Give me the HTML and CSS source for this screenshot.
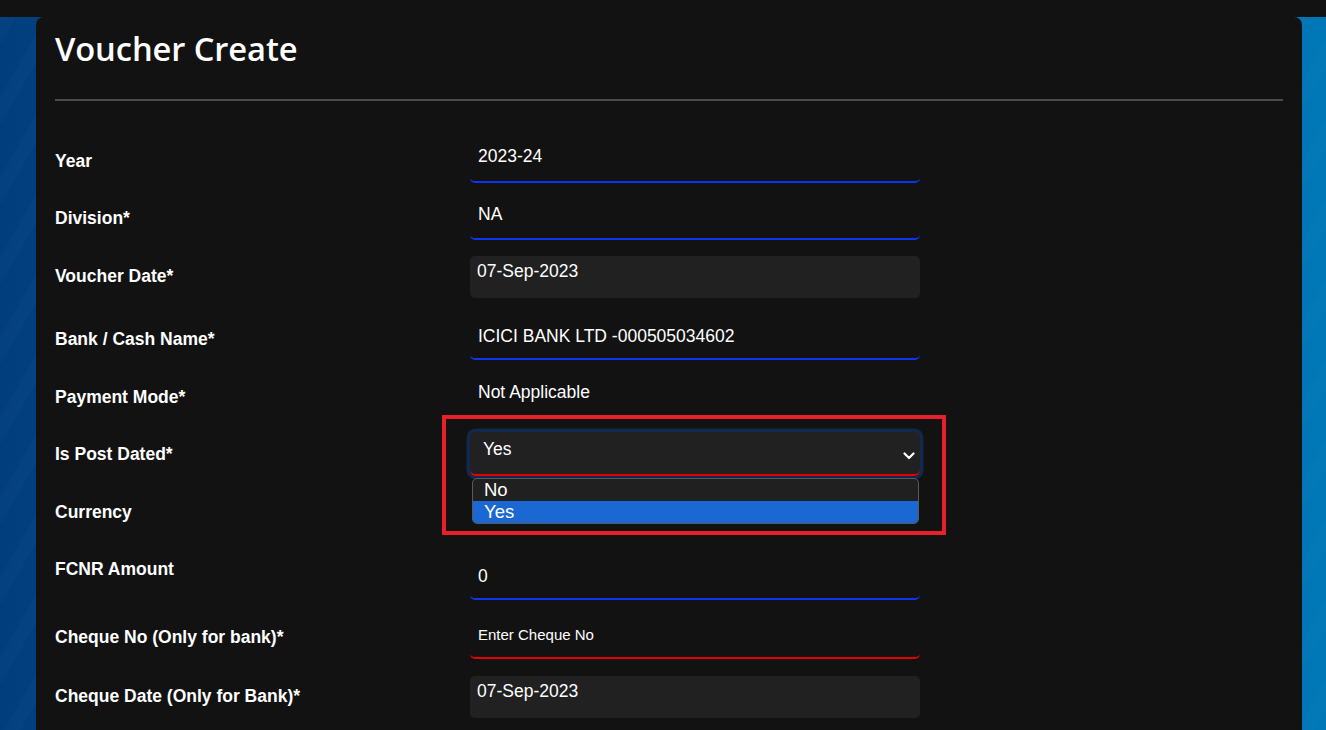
FILE: index.html
```html
<!DOCTYPE html>
<html lang="en">
<head>
<meta charset="utf-8">
<title>Voucher Create</title>
<link rel="stylesheet" href="styles.css">
</head>
<body>
<div class="topbar"></div>
<main class="backdrop">
  <section class="card">
    <h1 class="title">Voucher Create</h1>
    <div class="rule"></div>
    <form class="form">
      <div class="row r1">
        <label class="label">Year</label>
        <div class="field line blue">2023-24</div>
      </div>
      <div class="row r2">
        <label class="label">Division*</label>
        <div class="field line blue">NA</div>
      </div>
      <div class="row r3">
        <label class="label">Voucher Date*</label>
        <div class="field datebox">07-Sep-2023</div>
      </div>
      <div class="row r4">
        <label class="label">Bank / Cash Name*</label>
        <div class="field line blue">ICICI BANK LTD -000505034602</div>
      </div>
      <div class="row r5">
        <label class="label">Payment Mode*</label>
        <div class="field plain">Not Applicable</div>
      </div>
      <div class="row r6">
        <label class="label">Is Post Dated*</label>
        <div class="selectwrap">
          <div class="select">
            <span>Yes</span>
            <svg class="chev" width="12" height="8" viewBox="0 0 12 8"><path d="M1.5 1.5 L6 6 L10.5 1.5" fill="none" stroke="#fff" stroke-width="2.2" stroke-linecap="round" stroke-linejoin="round"/></svg>
          </div>
          <ul class="options">
            <li class="opt">No</li>
            <li class="opt active">Yes</li>
          </ul>
          <div class="highlight"></div>
        </div>
      </div>
      <div class="row r7">
        <label class="label">Currency</label>
        <div class="field"></div>
      </div>
      <div class="row r8">
        <label class="label">FCNR Amount</label>
        <div class="field line blue">0</div>
      </div>
      <div class="row r9">
        <label class="label">Cheque No (Only for bank)*</label>
        <div class="field line red placeholder">Enter Cheque No</div>
      </div>
      <div class="row r10">
        <label class="label">Cheque Date (Only for Bank)*</label>
        <div class="field datebox">07-Sep-2023</div>
      </div>
    </form>
  </section>
</main>
</body>
</html>
```

FILE: styles.css
```css
* { box-sizing: border-box; }
html, body { margin: 0; padding: 0; }
body {
  width: 1326px;
  height: 730px;
  overflow: hidden;
  background: #121212;
  font-family: "Liberation Sans", Arial, sans-serif;
  color: #fff;
}
.topbar {
  height: 17px;
  background: #121212;
}
.backdrop {
  height: 713px;
  background:
    repeating-linear-gradient(120deg, rgba(255,255,255,0.015) 0 14px, rgba(255,255,255,0) 14px 40px),
    linear-gradient(90deg, #013e7e 0%, #02579c 45%, #0077b7 100%);
  display: flex;
}
.card {
  margin-left: 36px;
  width: 1266px;
  height: 713px;
  background: #121212;
  border-radius: 8px 8px 0 0;
  padding: 12px 19px 0 19px;
}
.title {
  margin: 0;
  font-family: "Open Sans", "Noto Sans", sans-serif;
  font-weight: 600;
  font-size: 32.7px;
  line-height: 40px;
  letter-spacing: -0.1px;
  color: #fff;
}
.rule {
  margin-top: 30px;
  height: 2px;
  background: #4b4b4b;
}
.form {
  margin-top: 19px;
}
.row {
  display: grid;
  grid-template-columns: 415px 450px;
  align-items: start;
}
.label {
  font-weight: bold;
  font-size: 17.5px;
  line-height: 22px;
  color: #fff;
}
.field {
  font-size: 17.5px;
  line-height: 22px;
  padding-left: 8px;
  color: #fff;
}
.line {
  border-bottom: 2px solid #0b35ee;
  border-radius: 0 0 5px 5px;
}
.line.red { border-bottom-color: #e60000; }
.placeholder { font-size: 15px; }
.datebox {
  height: 42px;
  background: #212121;
  border-radius: 5px;
  padding: 4px 7px 0 7px;
}
.plain { padding-left: 8px; }

.r1 { height: 70px; }
.r1 .label { padding-top: 30px; }
.r1 .field { padding-top: 25px; padding-bottom: 14px; }

.r2 { height: 58px; }
.r2 .label { padding-top: 17px; }
.r2 .field { padding-top: 13px; padding-bottom: 13px; }

.r3 { height: 57px; }
.r3 .label { padding-top: 17px; }
.r3 .field { margin-top: 8px; }

.r4 { height: 60px; }
.r4 .label { padding-top: 23px; }
.r4 .field { padding-top: 20px; padding-bottom: 11px; }

.r5 { height: 55px; }
.r5 .label { padding-top: 21px; }
.r5 .field { padding-top: 16px; }

.r6 { height: 60px; }
.r6 .label { padding-top: 23px; }

.r7 { height: 60px; }
.r7 .label { padding-top: 21px; }

.r8 { height: 65px; }
.r8 .label { padding-top: 18px; }
.r8 .field { padding-top: 25px; padding-bottom: 11px; }

.r9 { height: 60px; }
.r9 .label { padding-top: 21px; }
.r9 .field { padding-top: 19px; padding-bottom: 11px; }

.r10 { height: 65px; }
.r10 .label { padding-top: 20px; }
.r10 .field { margin-top: 11px; }

.selectwrap {
  position: relative;
  margin-top: 12px;
  z-index: 2;
}
.select {
  height: 44px;
  background: #212121;
  border-radius: 6px;
  border-bottom: 2px solid #e60000;
  box-shadow: 0 0 0 3.5px #11294d;
  padding: 6px 5px 0 13px;
  font-size: 17.5px;
  line-height: 22px;
  display: flex;
  justify-content: space-between;
}
.chev {
  margin-top: 14px;
}
.options {
  position: absolute;
  left: 2px;
  top: 46px;
  width: 447px;
  margin: 0;
  padding: 0;
  list-style: none;
  background: #202020;
  border: 1px solid #5a5a5a;
  border-radius: 5px;
  overflow: hidden;
}
.opt {
  height: 22px;
  padding-left: 11px;
  font-size: 18.5px;
  line-height: 21px;
  color: #fff;
}
.opt.active { background: #1b68d3; }
.highlight {
  position: absolute;
  left: -28px;
  top: -17px;
  width: 504px;
  height: 120px;
  border: 4px solid #e8202a;
  pointer-events: none;
}
```
